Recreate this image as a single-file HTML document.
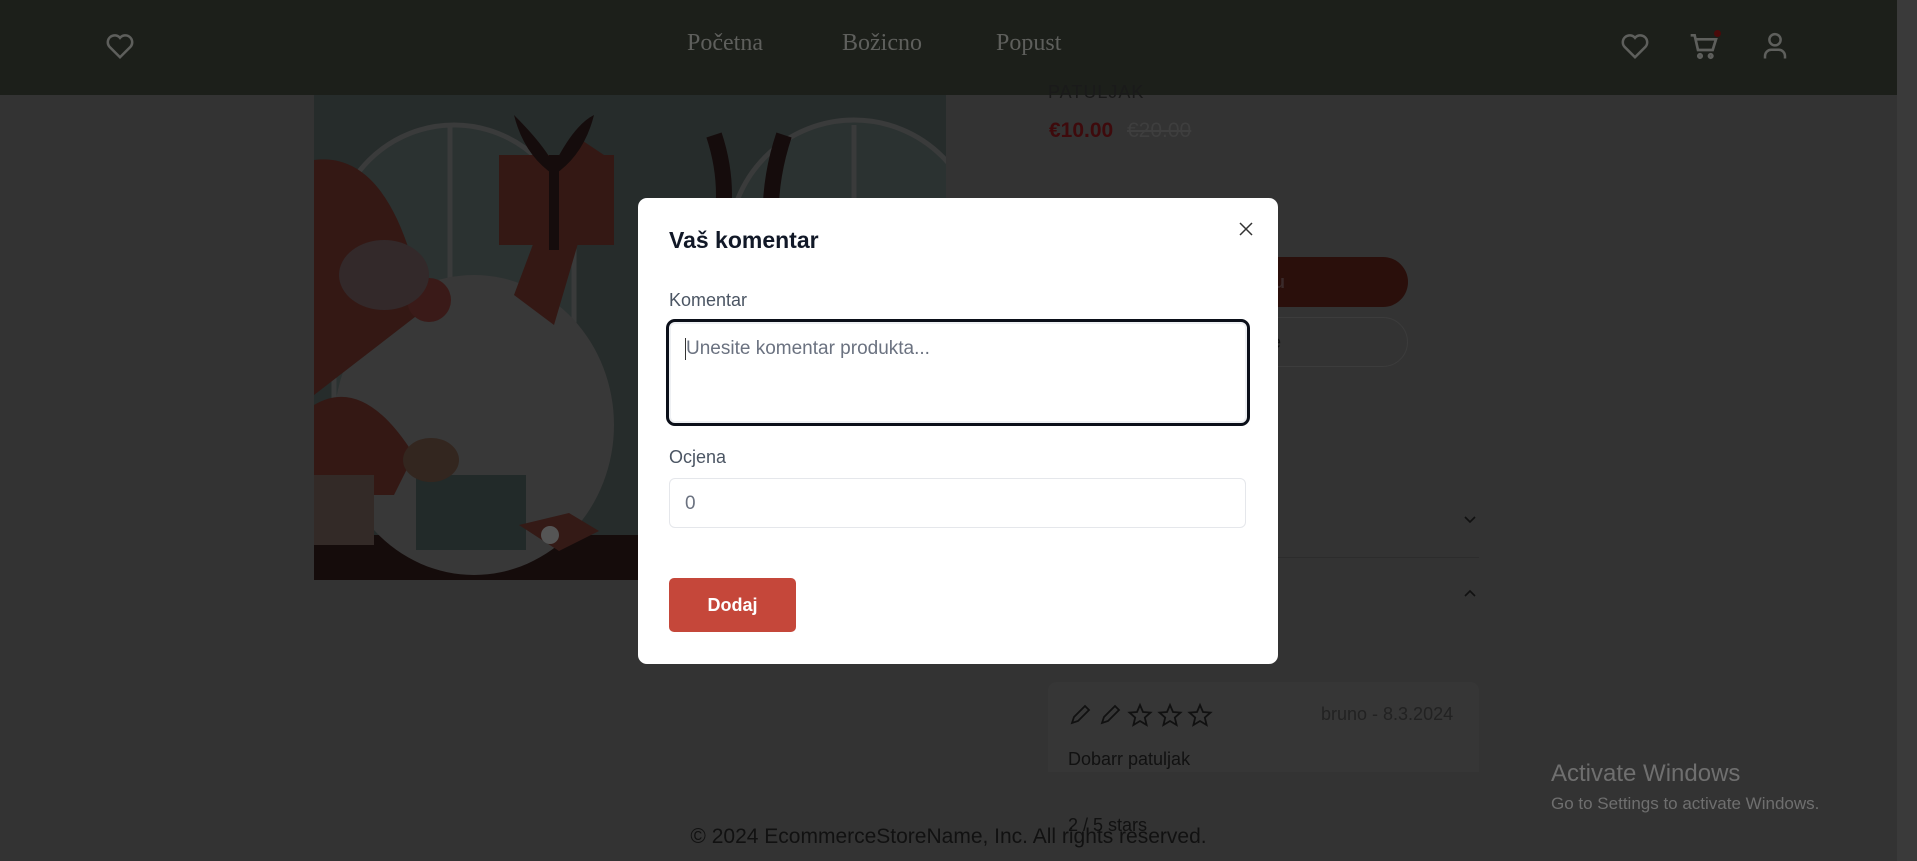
<!DOCTYPE html>
<html><head><meta charset="utf-8">
<style>
*{box-sizing:border-box;margin:0;padding:0}
body{width:1917px;height:861px;overflow:hidden;background:#333333;font-family:"Liberation Sans",sans-serif;position:relative}
.abs{position:absolute}
.header{left:0;top:0;width:1897px;height:95px;background:#1c1f1a}
.scroll{left:1897px;top:0;width:20px;height:861px;background:#3a3a3a}
.nav{top:30px;font-family:"Liberation Serif",serif;font-size:24px;color:#5e5f5c}
.modal{left:638px;top:198px;width:640px;height:466px;background:#fff;border-radius:9px}
</style></head><body>
<div class="abs header"></div>
<div class="abs scroll"></div>
<div class="abs nav" style="left:687px">Početna</div>
<div class="abs nav" style="left:842px">Božicno</div>
<div class="abs nav" style="left:996px">Popust</div>
<svg class="abs" style="left:105px;top:32px" width="30" height="28" viewBox="0 0 24 22" fill="none" stroke="#5e5f5c" stroke-width="2"><path d="M12 20 3.5 11.5A5 5 0 0 1 12 4.5a5 5 0 0 1 8.5 7Z"/></svg>
<svg class="abs" style="left:1620px;top:32px" width="30" height="28" viewBox="0 0 24 22" fill="none" stroke="#5e5f5c" stroke-width="2"><path d="M12 20 3.5 11.5A5 5 0 0 1 12 4.5a5 5 0 0 1 8.5 7Z"/></svg>
<svg class="abs" style="left:1688px;top:30px" width="32" height="32" viewBox="0 0 24 24" fill="none" stroke="#5e5f5c" stroke-width="2"><path d="M2 4h3l2.5 11h11L21 7H6"/><circle cx="9" cy="19.5" r="1.3"/><circle cx="17" cy="19.5" r="1.3"/></svg>
<div class="abs" style="left:1714px;top:30px;width:7px;height:7px;border-radius:50%;background:#4a0a0a"></div>
<svg class="abs" style="left:1760px;top:30px" width="30" height="32" viewBox="0 0 24 24" fill="none" stroke="#5e5f5c" stroke-width="2"><circle cx="12" cy="7" r="4.5"/><path d="M4 22v-2a5 5 0 0 1 5-5h6a5 5 0 0 1 5 5v2"/></svg>

<svg class="abs" style="left:314px;top:95px" width="632" height="485" viewBox="0 0 632 485">
<rect width="632" height="485" fill="#262c2b"/>
<path d="M20 250V150a120 120 0 0 1 240 0v180H20z" fill="#2b3231" stroke="#3a3b3b" stroke-width="5"/>
<line x1="136" y1="30" x2="136" y2="330" stroke="#3a3b3b" stroke-width="5"/>
<path d="M415 300V150a125 125 0 0 1 250 0v150z" fill="#2b3231" stroke="#3a3b3b" stroke-width="5"/>
<line x1="540" y1="30" x2="540" y2="300" stroke="#3a3b3b" stroke-width="5"/>
<rect x="0" y="440" width="632" height="45" fill="#150c0b"/>
<ellipse cx="160" cy="330" rx="140" ry="150" fill="#383838"/>
<path d="M0 65q80-10 110 150L0 300z" fill="#341814"/>
<path d="M200 200 L260 40 L290 60 L240 230z" fill="#341814"/>
<rect x="185" y="60" width="115" height="90" fill="#341814"/>
<path d="M200 20q30 30 40 50q20-40 40-50q-10 40-40 60q-30-20-40-60z" fill="#150c0c"/>
<rect x="235" y="60" width="10" height="95" fill="#150c0c"/>
<ellipse cx="115" cy="205" rx="22" ry="22" fill="#3a1a18"/>
<ellipse cx="70" cy="180" rx="45" ry="35" fill="#33292a"/>
<path d="M0 310q50-30 100 50l-20 40H0z" fill="#341814"/>
<rect x="102" y="380" width="110" height="75" fill="#222a29"/>
<rect x="0" y="380" width="60" height="70" fill="#332a27"/>
<ellipse cx="117" cy="365" rx="28" ry="22" fill="#33261f"/>
<path d="M400 40q20 60 0 120M470 40q-20 60-10 120" stroke="#150c0c" stroke-width="16" fill="none"/>
<path d="M205 430l50-12 30 18-40 20z" fill="#341a16"/>
<circle cx="236" cy="440" r="9" fill="#555"/>
</svg>

<div class="abs" style="left:1048px;top:82px;font-size:18px;color:#1a1a1a;letter-spacing:1px">PATULJAK</div>
<div class="abs" style="left:1049px;top:119px;font-size:21px;font-weight:bold;color:#3e0a0c">€10.00</div>
<div class="abs" style="left:1127px;top:119px;font-size:21px;color:#3e3e3e;text-decoration:line-through">€20.00</div>
<div class="abs" style="left:1220px;top:257px;width:188px;height:50px;border-radius:25px;background:#2a0f0b"></div>
<div class="abs" style="left:1264px;top:272px;font-size:18px;font-weight:bold;color:#3a2a2a">cu</div>
<div class="abs" style="left:1220px;top:317px;width:188px;height:50px;border-radius:25px;border:1px solid #3c3c3c"></div>
<div class="abs" style="left:1266px;top:332px;font-size:18px;color:#111">te</div>
<div class="abs" style="left:1264px;top:508px;font-size:20px;color:#111">y</div>
<svg class="abs" style="left:1463px;top:515px" width="14" height="10" viewBox="0 0 14 10" fill="none" stroke="#111" stroke-width="1.6"><path d="M2 2l5 5 5-5"/></svg>
<div class="abs" style="left:1278px;top:557px;width:201px;height:1px;background:#2c2c2c"></div>
<svg class="abs" style="left:1463px;top:588px" width="14" height="10" viewBox="0 0 14 10" fill="none" stroke="#111" stroke-width="1.6"><path d="M2 8l5-5 5 5"/></svg>

<div class="abs" style="left:1048px;top:682px;width:431px;height:100px;background:#363636;border-radius:8px"></div>
<svg class="abs" style="left:1068px;top:702px" width="150" height="26" viewBox="0 0 150 26" fill="none" stroke="#111" stroke-width="1.8">
<path d="M4 21l2-6 11-11 4 4-11 11z"/><path d="M34 21l2-6 11-11 4 4-11 11z"/>
<path id="s" d="M72 3l3 7 7.5.6-5.7 5 1.8 7.4L72 19l-6.6 4 1.8-7.4-5.7-5 7.5-.6z"/>
<path d="M102 3l3 7 7.5.6-5.7 5 1.8 7.4L102 19l-6.6 4 1.8-7.4-5.7-5 7.5-.6z"/>
<path d="M132 3l3 7 7.5.6-5.7 5 1.8 7.4L132 19l-6.6 4 1.8-7.4-5.7-5 7.5-.6z"/>
</svg>
<div class="abs" style="left:1321px;top:704px;font-size:18px;color:#222">bruno - 8.3.2024</div>
<div class="abs" style="left:1068px;top:749px;font-size:18px;color:#111">Dobarr patuljak</div>
<div class="abs" style="left:0;top:772px;width:1897px;height:89px;background:#333"></div>
<div class="abs" style="left:1068px;top:815px;font-size:18px;color:#111">2 / 5 stars</div>
<div class="abs" style="left:0;top:825px;width:1917px;text-align:center;font-size:21px;color:#111;padding-right:20px">© 2024 EcommerceStoreName, Inc. All rights reserved.</div>
<div class="abs" style="left:1551px;top:760px;font-size:24px;color:#6f6f6f">Activate Windows</div>
<div class="abs" style="left:1551px;top:794px;font-size:17px;color:#6f6f6f">Go to Settings to activate Windows.</div>

<div class="abs modal">
  <div class="abs" style="left:31px;top:29px;font-size:23px;font-weight:bold;color:#111827">Vaš komentar</div>
  <svg class="abs" style="left:601px;top:24px" width="14" height="14" viewBox="0 0 14 14" stroke="#333" stroke-width="1.5"><path d="M1 1l12 12M13 1 1 13"/></svg>
  <div class="abs" style="left:31px;top:92px;font-size:18px;color:#4b5563">Komentar</div>
  <div class="abs" style="left:28px;top:121px;width:584px;height:107px;border:3px solid #0b0f19;border-radius:9px;box-shadow:inset 0 0 0 2px #eef0f3"></div>
  <div class="abs" style="left:47px;top:140px;width:1px;height:22px;background:#333"></div>
  <div class="abs" style="left:48px;top:140px;font-size:19px;color:#6b7280">Unesite komentar produkta...</div>
  <div class="abs" style="left:31px;top:249px;font-size:18px;color:#4b5563">Ocjena</div>
  <div class="abs" style="left:31px;top:280px;width:577px;height:50px;border:1px solid #e5e7eb;border-radius:6px"></div>
  <div class="abs" style="left:47px;top:295px;font-size:19px;color:#6b7280">0</div>
  <div class="abs" style="left:31px;top:380px;width:127px;height:54px;background:#c5473a;border-radius:5px;color:#fff;font-size:18px;font-weight:bold;text-align:center;line-height:54px">Dodaj</div>
</div>
</body></html>
